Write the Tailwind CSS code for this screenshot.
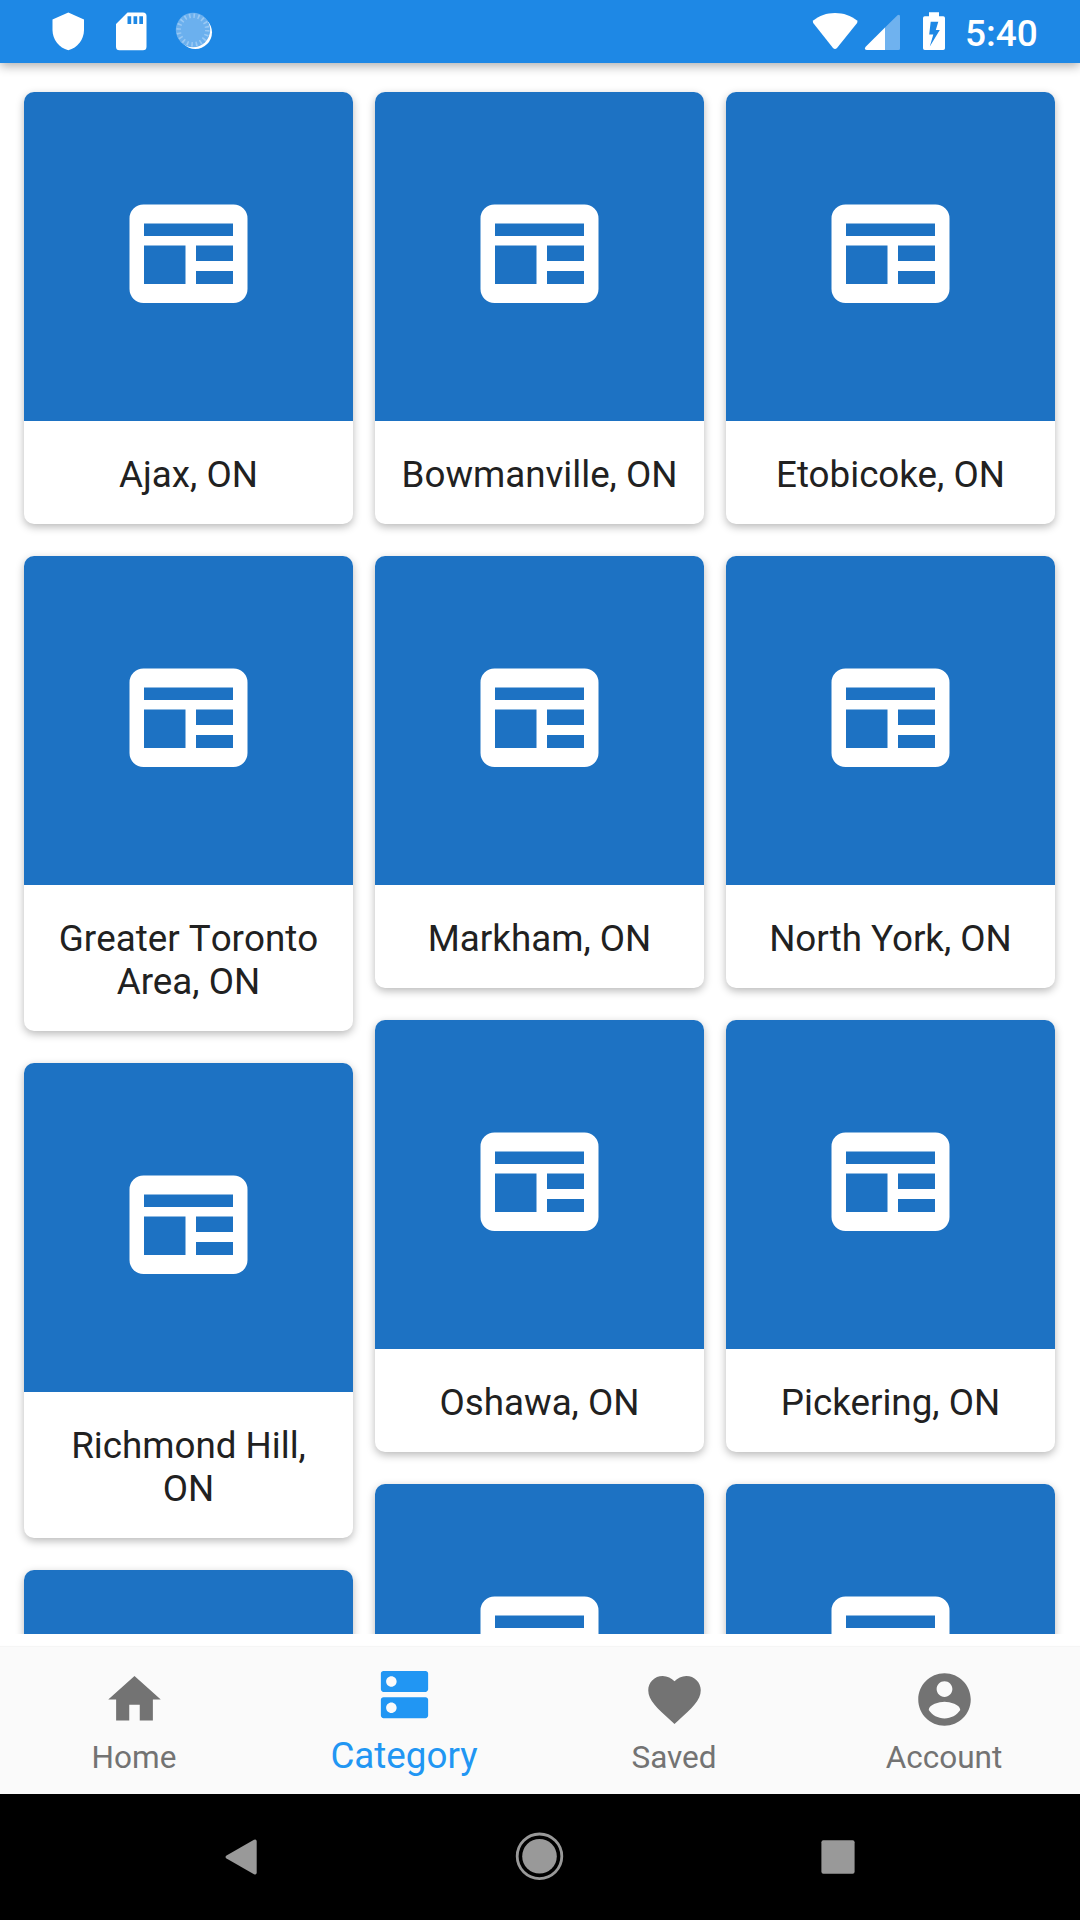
<!DOCTYPE html>
<html lang="en">
<head>
<meta charset="utf-8">
<title>Category</title>
<script src="https://cdn.jsdelivr.net/npm/@tailwindcss/browser@4"></script>
</head>
<body class="w-[1080px] h-[1920px] overflow-hidden bg-white font-[Roboto,sans-serif] flex flex-col">
<svg class="hidden">
  <symbol id="news" viewBox="0 0 329 329">
    <path fill="#fff" fill-rule="evenodd" d="M119.500 112.500H209.500a14 14 0 0 1 14 14V197a14 14 0 0 1-14 14H119.500a14 14 0 0 1-14-14V126.500a14 14 0 0 1 14-14zM120 131.500V144H209V131.500zM120 153.500V192H161.500V153.500zM172 153.500V169H209V153.500zM172 179V192H209V179z"/>
  </symbol>
</svg>

<header class="relative z-10 h-[63px] shrink-0 bg-[#1e88e5] shadow-[0_3px_10px_rgba(0,0,0,0.32)] flex items-start justify-between">
  <svg class="w-[240px] h-[63px]" viewBox="0 0 240 63">
    <path fill="#fff" d="M68.300 12.500L84 19.500V30c0 9.500-6.500 18-15.700 20.200C59 48 52.500 39.500 52.500 30V19.500z"/>
    <path fill="#fff" fill-rule="evenodd" d="M127.500 12.500H143a3.500 3.500 0 0 1 3.500 3.500V46.700a3.500 3.500 0 0 1-3.500 3.500H119.500a3.500 3.500 0 0 1-3.500-3.500V24zM127.500 16.300V24H131.200V16.300zM133.500 16.300V24H137.200V16.300zM139.300 16.300V24H143V16.300z"/>
    <circle cx="195.300" cy="32.300" r="16.700" fill="#fff"/>
    <circle cx="193" cy="30" r="17.200" fill="#6bb0ee"/>
    <circle cx="193" cy="30" r="14.300" fill="none" stroke="#98c8f4" stroke-width="4.500" stroke-dasharray="1.600 2.893"/>
  </svg>
  <div class="flex">
    <svg class="w-[180px] h-[63px]" viewBox="780 0 180 63">
      <path fill="#fff" d="M835 13c8.500 0 16 2.800 21.700 7.300q1.400 1.200.4 2.600L837 48q-2 2-4 0L813.200 22.900q-1-1.400.4-2.600C819.200 15.800 826.500 13 835 13z"/>
      <path fill="#6fb2ef" d="M900 16.500V48.500a1.500 1.500 0 0 1-1.500 1.500H885V27.500L897.500 15.300q2.500-1.500 2.500 1.200z"/>
      <path fill="#fff" d="M885 27.500V50H867q-3.500-.5-1.300-3.300z"/>
      <path fill="#fff" fill-rule="evenodd" d="M929 12.300H939V16.200H943.200a1.800 1.800 0 0 1 1.800 1.800V48.200a1.800 1.800 0 0 1-1.800 1.800H924.800a1.800 1.800 0 0 1-1.800-1.800V18a1.800 1.800 0 0 1 1.800-1.800H929zM930.700 21.800L929.200 34.500H933.300L929.800 46.500L939.800 30H935.800L938.300 21.800z"/>
    </svg>
    <div class="w-[120px] pt-3 pl-[5px] text-[37px] leading-[43px] font-medium text-white">5:40</div>
  </div>
</header>

<main class="h-[1571px] shrink-0 overflow-hidden px-6 pt-[29px] grid grid-cols-[329px_329px_329px] gap-[22px] items-start text-center text-[36.75px] leading-[43px] text-[#212121]">
  <div class="flex flex-col gap-8">
    <article class="rounded-[10px] bg-white shadow-[0_3px_9px_rgba(0,0,0,0.28)]"><svg class="block size-[329px] rounded-t-[10px] bg-[#1d72c3]"><use href="#news"/></svg><h2 class="pt-8 pb-7 px-[21px]">Ajax, ON</h2></article>
    <article class="rounded-[10px] bg-white shadow-[0_3px_9px_rgba(0,0,0,0.28)]"><svg class="block size-[329px] rounded-t-[10px] bg-[#1d72c3]"><use href="#news"/></svg><h2 class="pt-8 pb-7 px-[21px]"><span class="[font-kerning:none]">Greater Toronto</span><br>Area, ON</h2></article>
    <article class="rounded-[10px] bg-white shadow-[0_3px_9px_rgba(0,0,0,0.28)]"><svg class="block size-[329px] rounded-t-[10px] bg-[#1d72c3]"><use href="#news"/></svg><h2 class="pt-8 pb-7 px-[21px]">Richmond Hill,<br>ON</h2></article>
    <article class="rounded-[10px] bg-white shadow-[0_3px_9px_rgba(0,0,0,0.28)]"><svg class="block size-[329px] rounded-t-[10px] bg-[#1d72c3]"><use href="#news"/></svg></article>
  </div>
  <div class="flex flex-col gap-8">
    <article class="rounded-[10px] bg-white shadow-[0_3px_9px_rgba(0,0,0,0.28)]"><svg class="block size-[329px] rounded-t-[10px] bg-[#1d72c3]"><use href="#news"/></svg><h2 class="pt-8 pb-7 px-[21px]">Bowmanville, ON</h2></article>
    <article class="rounded-[10px] bg-white shadow-[0_3px_9px_rgba(0,0,0,0.28)]"><svg class="block size-[329px] rounded-t-[10px] bg-[#1d72c3]"><use href="#news"/></svg><h2 class="pt-8 pb-7 px-[21px]">Markham, ON</h2></article>
    <article class="rounded-[10px] bg-white shadow-[0_3px_9px_rgba(0,0,0,0.28)]"><svg class="block size-[329px] rounded-t-[10px] bg-[#1d72c3]"><use href="#news"/></svg><h2 class="pt-8 pb-7 px-[21px]">Oshawa, ON</h2></article>
    <article class="rounded-[10px] bg-white shadow-[0_3px_9px_rgba(0,0,0,0.28)]"><svg class="block size-[329px] rounded-t-[10px] bg-[#1d72c3]"><use href="#news"/></svg></article>
  </div>
  <div class="flex flex-col gap-8">
    <article class="rounded-[10px] bg-white shadow-[0_3px_9px_rgba(0,0,0,0.28)]"><svg class="block size-[329px] rounded-t-[10px] bg-[#1d72c3]"><use href="#news"/></svg><h2 class="pt-8 pb-7 px-[21px]">Etobicoke, ON</h2></article>
    <article class="rounded-[10px] bg-white shadow-[0_3px_9px_rgba(0,0,0,0.28)]"><svg class="block size-[329px] rounded-t-[10px] bg-[#1d72c3]"><use href="#news"/></svg><h2 class="pt-8 pb-7 px-[21px]">North York, ON</h2></article>
    <article class="rounded-[10px] bg-white shadow-[0_3px_9px_rgba(0,0,0,0.28)]"><svg class="block size-[329px] rounded-t-[10px] bg-[#1d72c3]"><use href="#news"/></svg><h2 class="pt-8 pb-7 px-[21px]">Pickering, ON</h2></article>
    <article class="rounded-[10px] bg-white shadow-[0_3px_9px_rgba(0,0,0,0.28)]"><svg class="block size-[329px] rounded-t-[10px] bg-[#1d72c3]"><use href="#news"/></svg></article>
  </div>
</main>

<nav class="mt-[13px] h-[147px] shrink-0 bg-[#fafafa] shadow-[0_-1px_1px_rgba(0,0,0,0.04)] pr-[3px] grid grid-cols-[270px_270px_270px_270px] text-center text-[31.5px] leading-[37px] text-[#737373]">
  <a class="flex flex-col items-center pt-[21px] pr-[2px]"><svg class="size-[63px]" viewBox="0 0 24 24" fill="currentColor"><path d="M10 20v-6h4v6h5v-8h3L12 3 2 12h3v8z"/></svg><span class="pt-[8px]">Home</span></a>
  <a class="flex flex-col items-center pt-[16px] pr-[2px] text-[#2196f3]"><svg class="size-[63px]" viewBox="0 0 24 24" fill="currentColor"><path d="M20 13H4c-.55 0-1 .45-1 1v6c0 .55.45 1 1 1h16c.55 0 1-.45 1-1v-6c0-.55-.45-1-1-1zM7 19c-1.100 0-2-.9-2-2s.9-2 2-2 2 .9 2 2-.9 2-2 2zM20 3H4c-.55 0-1 .45-1 1v6c0 .55.45 1 1 1h16c.55 0 1-.45 1-1V4c0-.55-.45-1-1-1zM7 9c-1.100 0-2-.9-2-2s.9-2 2-2 2 .9 2 2-.9 2-2 2z"/></svg><span class="pt-[8px] text-[36.75px] leading-[43px]">Category</span></a>
  <a class="flex flex-col items-center pt-[21px] pr-[2px]"><svg class="size-[63px]" viewBox="0 0 24 24" fill="currentColor"><path d="M12 21.350l-1.450-1.320C5.400 15.360 2 12.280 2 8.500 2 5.420 4.420 3 7.500 3c1.740 0 3.410.81 4.500 2.090C13.090 3.810 14.760 3 16.500 3 19.580 3 22 5.420 22 8.500c0 3.780-3.400 6.860-8.550 11.540L12 21.350z"/></svg><span class="pt-[8px]">Saved</span></a>
  <a class="flex flex-col items-center pt-[21px] pr-[2px]"><svg class="size-[63px]" viewBox="0 0 24 24" fill="currentColor"><path d="M12 2C6.480 2 2 6.480 2 12s4.480 10 10 10 10-4.480 10-10S17.520 2 12 2zm0 3c1.660 0 3 1.340 3 3s-1.340 3-3 3-3-1.340-3-3 1.340-3 3-3zm0 14.200c-2.500 0-4.710-1.280-6-3.220.03-1.990 4-3.080 6-3.080 1.990 0 5.970 1.090 6 3.080-1.290 1.940-3.500 3.220-6 3.220z"/></svg><span class="pt-[8px]">Account</span></a>
</nav>

<footer class="h-[126px] shrink-0 bg-black">
  <svg class="block w-[1080px] h-[126px]" viewBox="0 1794 1080 126" fill="#999">
    <path d="M226.500 1855.500L254 1839.800q2.700-1 2.700 1.700V1872.500q0 2.700-2.700 1.700L226.500 1858.500q-2-1.500 0-3z"/>
    <circle cx="539.500" cy="1856.300" r="22.300" fill="none" stroke="#999" stroke-width="2.800"/>
    <circle cx="539.500" cy="1856.300" r="17.300"/>
    <rect x="821.400" y="1840.300" width="33.200" height="33.500" rx="2"/>
  </svg>
</footer>
</body>
</html>
